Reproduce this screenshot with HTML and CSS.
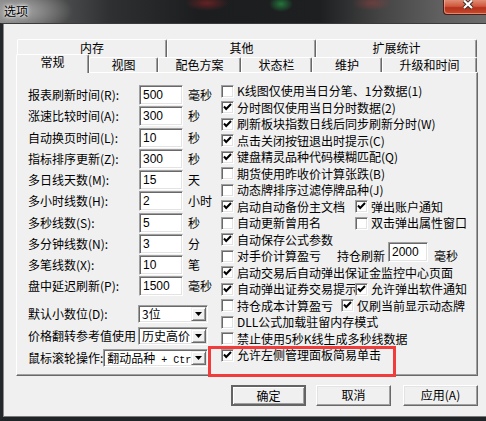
FILE: index.html
```html
<!doctype html>
<html>
<head>
<meta charset="utf-8">
<title>选项</title>
<link rel="stylesheet" href="styles.css">
</head>
<body>
<div class="window">
  <!-- 标题栏 -->
  <div class="titlebar">
    <span class="title">选项</span>
    <div class="close">
      <svg width="43" height="15" viewBox="0 0 43 15">
        <path d="M20 0.5 L28 8 M28 0.5 L20 8" stroke="#3a2a28" stroke-width="4" fill="none"/>
        <path d="M20 0.5 L28 8 M28 0.5 L20 8" stroke="#fff" stroke-width="2.2" fill="none"/>
      </svg>
    </div>
  </div>

  <div class="client">
    <!-- 选项卡 -->
    <div class="tabs">
      <div class="tabrow back">
        <div class="tab t-mem">内存</div>
        <div class="tab t-other">其他</div>
        <div class="tab t-stat">扩展统计</div>
      </div>
      <div class="tabrow front">
        <div class="tab active t-general">常规</div>
        <div class="tab t-view">视图</div>
        <div class="tab t-color">配色方案</div>
        <div class="tab t-status">状态栏</div>
        <div class="tab t-maint">维护</div>
        <div class="tab t-upgrade">升级和时间</div>
      </div>
    </div>

    <div class="panel">
      <!-- 左侧参数 -->
      <div class="left">
        <div class="fields">
          <span>报表刷新时间(R):</span><span class="edit">500</span><span class="unit">毫秒</span>
          <span>涨速比较时间(A):</span><span class="edit">300</span><span class="unit">秒</span>
          <span>自动换页时间(L):</span><span class="edit">10</span><span class="unit">秒</span>
          <span>指标排序更新(Z):</span><span class="edit">300</span><span class="unit">秒</span>
          <span>多日线天数(M):</span><span class="edit">15</span><span class="unit">天</span>
          <span>多小时线数(H):</span><span class="edit">2</span><span class="unit">小时</span>
          <span>多秒线数(S):</span><span class="edit">5</span><span class="unit">秒</span>
          <span>多分钟线数(N):</span><span class="edit">3</span><span class="unit">分</span>
          <span>多笔线数(X):</span><span class="edit">10</span><span class="unit">笔</span>
          <span>盘中延迟刷新(P):</span><span class="edit">1500</span><span class="unit">毫秒</span>
        </div>
        <div class="combos">
          <div class="combo-row">
            <span>默认小数位(D):</span>
            <div class="combo"><span class="combo-text">3位</span><span class="combo-btn"><svg width="7" height="4"><path d="M0 0 H7 L3.5 4 Z" fill="#000"/></svg></span></div>
          </div>
          <div class="combo-row">
            <span>价格翻转参考值使用</span>
            <div class="combo"><span class="combo-text">历史高价</span><span class="combo-btn"><svg width="7" height="4"><path d="M0 0 H7 L3.5 4 Z" fill="#000"/></svg></span></div>
          </div>
          <div class="combo-row">
            <span>鼠标滚轮操作:</span>
            <div class="combo wide"><span class="combo-text clip">翻动品种<span class="mono"> + Ctr</span></span><span class="combo-btn"><svg width="7" height="4"><path d="M0 0 H7 L3.5 4 Z" fill="#000"/></svg></span></div>
          </div>
        </div>
      </div>

      <!-- 右侧开关 -->
      <div class="options">
        <div class="opt"><span class="cb"><span class="box"></span>K线图仅使用当日分笔、1分数据(1)</span></div>
        <div class="opt"><span class="cb"><span class="box on"></span>分时图仅使用当日分时数据(2)</span></div>
        <div class="opt"><span class="cb"><span class="box on"></span>刷新板块指数日线后同步刷新分时(W)</span></div>
        <div class="opt"><span class="cb"><span class="box on"></span>点击关闭按钮退出时提示(C)</span></div>
        <div class="opt"><span class="cb"><span class="box on"></span>键盘精灵品种代码模糊匹配(Q)</span></div>
        <div class="opt"><span class="cb"><span class="box"></span>期货使用昨收价计算张跌(B)</span></div>
        <div class="opt"><span class="cb"><span class="box"></span>动态牌排序过滤停牌品种(J)</span></div>
        <div class="opt"><span class="cb w134"><span class="box on"></span>启动自动备份主文档</span><span class="cb"><span class="box on"></span>弹出账户通知</span></div>
        <div class="opt"><span class="cb w134"><span class="box"></span>自动更新曾用名</span><span class="cb"><span class="box"></span>双击弹出属性窗口</span></div>
        <div class="opt"><span class="cb"><span class="box on"></span>自动保存公式参数</span></div>
        <div class="opt"><span class="cb w116"><span class="box"></span>对手价计算盈亏</span><span class="hold">持仓刷新</span><span class="edit small">2000</span><span class="hold-unit">毫秒</span></div>
        <div class="opt"><span class="cb"><span class="box on"></span>启动交易后自动弹出保证金监控中心页面</span></div>
        <div class="opt"><span class="cb w134"><span class="box on"></span>自动弹出证券交易提示</span><span class="cb"><span class="box on"></span>允许弹出软件通知</span></div>
        <div class="opt"><span class="cb w120"><span class="box"></span>持仓成本计算盈亏</span><span class="cb"><span class="box on"></span>仅刷当前显示动态牌</span></div>
        <div class="opt"><span class="cb"><span class="box"></span>DLL公式加载驻留内存模式</span></div>
        <div class="opt"><span class="cb"><span class="box"></span>禁止使用5秒K线生成多秒线数据</span></div>
        <div class="opt marked"><span class="cb"><span class="box on"></span>允许左侧管理面板简易单击</span></div>
      </div>
    </div>

    <!-- 底部按钮 -->
    <div class="buttons">
      <div class="btn default">确定</div>
      <div class="btn">取消</div>
      <div class="btn apply">应用(A)</div>
    </div>
  </div>
</div>
</body>
</html>
```

FILE: styles.css
```css
/* 基本设置 */
* {
    box-sizing: border-box;
}

body {
    margin: 0;
    background: #1d2224;
    font-family: "Noto Sans CJK SC", "Liberation Sans", sans-serif;
    font-size: 12px;
    color: #000;
    overflow: hidden;
}

.window {
    width: 486px;
    height: 421px;
    display: flex;
    flex-direction: column;
}

/* 标题栏 */
.titlebar {
    height: 23px;
    flex: none;
    display: flex;
    justify-content: space-between;
    align-items: flex-start;
    background:
        radial-gradient(ellipse 22px 8px at 207px 3px, rgba(190, 40, 40, .45), transparent),
        radial-gradient(ellipse 12px 8px at 281px 4px, rgba(40, 190, 80, .55), transparent),
        radial-gradient(ellipse 20px 8px at 372px 3px, rgba(190, 60, 60, .35), transparent),
        radial-gradient(ellipse 55px 22px at 18px 11px, #a8a8a8, transparent),
        linear-gradient(90deg, #7a7a7a 0, #5a5a5a 40px, #2e3032 110px, #1b1d1f 200px, #1d1f21 320px, #444 380px, #606060 440px, #6c6c6c 486px);
}

.title {
    padding: 3px 0 0 4px;
    line-height: 16px;
    text-shadow: 0 0 5px #fff, 0 0 3px #fff;
}

.close {
    width: 43px;
    height: 15px;
    border: 1px solid #4a1e16;
    border-top: none;
    border-right: none;
    border-radius: 0 0 0 4px;
    background: linear-gradient(#e08c76 0, #d0573c 45%, #b5311b 55%, #c64a2e 100%);
    box-shadow: inset 1px -1px rgba(255, 200, 180, .5);
}

.close svg {
    display: block;
}

/* 窗口内容 */
.client {
    flex: 1;
    background: #f0f0f0;
    border-left: 3px solid #23282b;
    border-top: 1px solid #3b3b3b;
    border-bottom: 4px solid #1f2426;
    box-shadow: inset 1px 0 #8a8a8a, inset 0 -1px #7a7a7a;
    padding: 15px 8px 11px 13px;
    display: flex;
    flex-direction: column;
}

/* 选项卡 */
.tabs {
    height: 33px;
    display: flex;
    flex-direction: column;
}

.tabrow {
    display: flex;
}

.tabrow.back {
    height: 18px;
    padding-left: 1px;
}

.tabrow.front {
    height: 15px;
    align-items: flex-end;
}

.tab {
    height: 100%;
    background: #f0f0f0;
    border-top: 1px solid #fff;
    border-left: 1px solid #fff;
    border-right: 1px solid #696969;
    box-shadow: inset -1px 0 #a0a0a0;
    border-radius: 2px 2px 0 0;
    text-align: center;
    white-space: nowrap;
}

.back .tab {
    line-height: 16px;
}

.front .tab {
    line-height: 11px;
    padding-top: 1px;
}

.front .tab.active {
    height: 19px;
    margin-bottom: -1px;
    line-height: 12px;
    padding-top: 1px;
    position: relative;
    z-index: 1;
}

.t-mem { width: 150px; }
.t-other { width: 149px; }
.t-stat { width: 161px; }
.t-general { width: 73px; }
.t-view { width: 69px; }
.t-color { width: 83px; }
.t-status { width: 71px; }
.t-maint { width: 70px; }
.t-upgrade { width: 95px; }

/* 面板 */
.panel {
    width: 462px;
    height: 304px;
    border-top: 1px solid #fff;
    border-left: 1px solid #fff;
    border-right: 1px solid #696969;
    border-bottom: 1px solid #696969;
    box-shadow: inset -1px -1px #a0a0a0;
    padding: 12px 0 0 11px;
    display: flex;
    gap: 7px;
}

.left {
    width: 186px;
    flex: none;
}

.fields {
    display: grid;
    grid-template-columns: 111px 44px auto;
    grid-auto-rows: 20px;
    row-gap: 1.25px;
    align-items: center;
    line-height: 14px;
    white-space: nowrap;
}

.unit {
    padding-left: 5px;
}

.edit {
    height: 20px;
    background: #fff;
    border: 1px solid;
    border-color: #a0a0a0 #fff #fff #a0a0a0;
    box-shadow: inset 1px 1px #696969, inset -1px -1px #e3e3e3;
    padding-left: 3px;
    font-family: "Liberation Sans", sans-serif;
    font-size: 12px;
    line-height: 18px;
}

.combos {
    width: 180px;
    margin-top: 9px;
    display: flex;
    flex-direction: column;
    gap: 4px;
}

.combo-row {
    height: 18px;
    display: flex;
    justify-content: space-between;
    align-items: center;
    line-height: 14px;
    white-space: nowrap;
}

.combo {
    width: 70px;
    height: 18px;
    flex: none;
    display: flex;
    align-items: stretch;
    background: #fff;
    border: 1px solid;
    border-color: #a0a0a0 #fff #fff #a0a0a0;
    box-shadow: inset 1px 1px #696969, inset -1px -1px #e3e3e3;
    padding: 1px;
}

.combo.wide {
    width: 105px;
}

.combo-text {
    flex: 1;
    white-space: nowrap;
    padding-left: 2px;
    line-height: 14px;
}

.combo-text.clip {
    overflow: hidden;
}

.mono {
    font-family: "Liberation Mono", monospace;
    font-size: 10px;
}

.combo-btn {
    width: 15px;
    flex: none;
    display: flex;
    align-items: center;
    justify-content: center;
    background: #f0f0f0;
    border: 1px solid;
    border-color: #f0f0f0 #696969 #696969 #f0f0f0;
    box-shadow: inset 1px 1px #fff, inset -1px -1px #a0a0a0;
}

.combo-btn svg {
    display: block;
}

/* 复选框列表 */
.options {
    margin-top: -2px;
    display: flex;
    flex-direction: column;
}

.opt {
    height: 16.5px;
    display: flex;
    align-items: center;
    white-space: nowrap;
    line-height: 14px;
}

.cb {
    display: inline-flex;
    align-items: center;
    flex-shrink: 0;
}

.w134 { width: 134px; }
.w120 { width: 120px; }
.w116 { width: 116px; }

.box {
    width: 13px;
    height: 13px;
    margin-right: 3px;
    flex: none;
    background: #fff center no-repeat;
    border: 1px solid;
    border-color: #a0a0a0 #fff #fff #a0a0a0;
    box-shadow: inset 1px 1px #696969, inset -1px -1px #e3e3e3;
}

.box.on {
    background-image: url("data:image/svg+xml;utf8,<svg xmlns='http://www.w3.org/2000/svg' width='11' height='11'><path d='M2 4.5 L4.2 7 L9 2' stroke='black' stroke-width='2' fill='none'/></svg>");
}

.hold {
    margin-right: 3px;
}

.edit.small {
    width: 40px;
    align-self: flex-start;
    margin-top: -6px;
}

.hold-unit {
    margin-left: 6px;
}

/* 红框标注 */
.marked {
    position: relative;
}

.marked::after {
    content: "";
    position: absolute;
    left: -13px;
    top: -1px;
    width: 182px;
    height: 25px;
    border: 3px solid #f23b3b;
}

/* 按钮 */
.buttons {
    height: 21px;
    margin-top: 9px;
    display: flex;
    justify-content: flex-end;
}

.btn {
    width: 75px;
    height: 21px;
    margin-left: 10px;
    text-align: center;
    line-height: 17px;
    background: #f0f0f0;
    border: 1px solid;
    border-color: #fff #696969 #696969 #fff;
    box-shadow: inset -1px -1px #a0a0a0, inset 1px 1px #e3e3e3;
}

.btn.default {
    border: 2px solid #646464;
    box-shadow: inset 1px 1px #fff, inset -1px -1px #a0a0a0;
    line-height: 17px;
}

.btn.apply {
    margin-left: 12px;
}
```
